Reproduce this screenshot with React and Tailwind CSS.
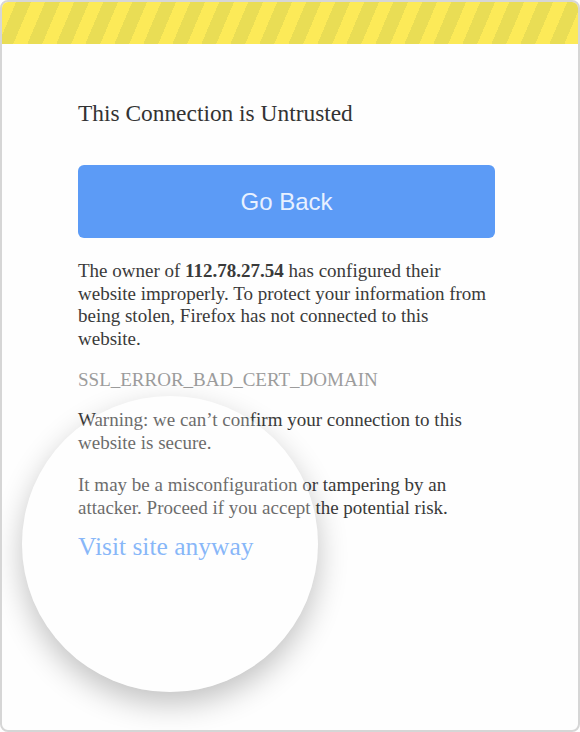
const App = () => {
  return (
    <div className="w-[580px] h-[732px] bg-white">
      <div className="relative h-full overflow-hidden rounded-[8px] border-2 border-[#d6d6d6] bg-[#fefefe]">
        {/* Warning stripes */}
        <div className="h-[42px] bg-[repeating-linear-gradient(113deg,#fcea58_0px,#fcea58_13px,#e9dd55_13px,#e9dd55_26.7px)]" />

        {/* Content */}
        <div className="pl-[76px] w-[493px] font-['Liberation_Serif',serif]">
          <h1 className="mt-[55px] text-[23.4px] leading-[28px] text-[#333]">
            This Connection is Untrusted
          </h1>

          <button className="mt-[38px] w-[417px] h-[73px] rounded-[6px] bg-[#5c9bf6] font-['Liberation_Sans',sans-serif] text-[24px] text-[#e8f1ff]">
            Go Back
          </button>

          <p className="mt-[22px] text-[19px] leading-[22.5px] text-[#3a3a3a]">
            <span className="block">
              The owner of <b>112.78.27.54</b> has configured their
            </span>
            <span className="block">website improperly. To protect your information from</span>
            <span className="block">being stolen, Firefox has not connected to this</span>
            <span className="block">website.</span>
          </p>

          <p className="mt-[19px] text-[19px] leading-[22.5px] text-[#9c9c9c]">
            SSL_ERROR_BAD_CERT_DOMAIN
          </p>

          <p className="mt-[17.5px] text-[19px] leading-[22.5px] text-[#3a3a3a]">
            <span className="block">Warning: we can’t confirm your connection to this</span>
            <span className="block">website is secure.</span>
          </p>

          <p className="mt-[20px] text-[19px] leading-[22.5px] text-[#3a3a3a]">
            <span className="block">It may be a misconfiguration or tampering by an</span>
            <span className="block">attacker. Proceed if you accept the potential risk.</span>
          </p>

          <a className="mt-[13px] block text-[25.5px] leading-[30px] text-[#619ff6]">
            Visit site anyway
          </a>
        </div>

        {/* Magnifier */}
        <div className="absolute left-[20px] top-[394px] w-[296px] h-[296px] rounded-full bg-white/25 shadow-[0_12px_30px_rgba(0,0,0,0.24)]" />
      </div>
    </div>
  );
};

export default App;
